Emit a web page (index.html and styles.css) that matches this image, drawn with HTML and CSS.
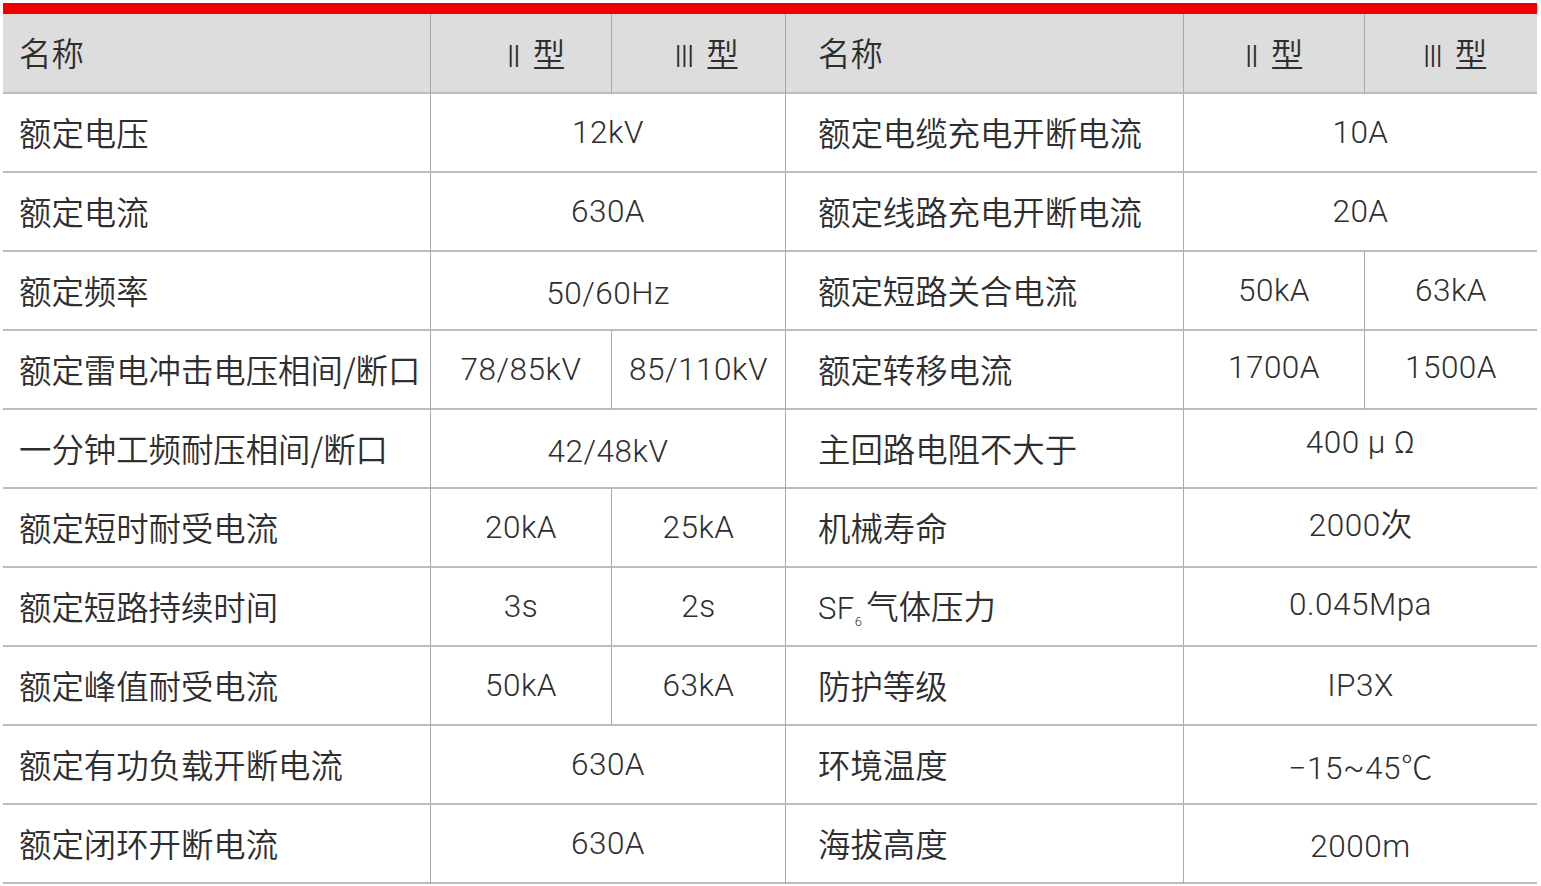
FILE: index.html
```html
<!DOCTYPE html>
<html lang="zh-CN">
<head>
<meta charset="utf-8">
<title>参数表</title>
<link rel="stylesheet" href="styles.css">
</head>
<body>
<div class="wrap">
<table class="spec">
  <colgroup>
    <col class="c1"><col class="c2"><col class="c3"><col class="c4"><col class="c5"><col class="c6">
  </colgroup>
  <thead>
    <tr>
      <th class="name">名称</th>
      <th class="val hl"><span class="roman">II</span> 型</th>
      <th class="val hl2"><span class="roman">III</span> 型</th>
      <th class="name right">名称</th>
      <th class="val"><span class="roman">II</span> 型</th>
      <th class="val hr"><span class="roman">III</span> 型</th>
    </tr>
  </thead>
  <tbody>
    <tr>
      <td class="name">额定电压</td>
      <td class="val" colspan="2">12kV</td>
      <td class="name right">额定电缆充电开断电流</td>
      <td class="val" colspan="2">10A</td>
    </tr>
    <tr>
      <td class="name">额定电流</td>
      <td class="val" colspan="2">630A</td>
      <td class="name right">额定线路充电开断电流</td>
      <td class="val" colspan="2">20A</td>
    </tr>
    <tr>
      <td class="name">额定频率</td>
      <td class="val down" colspan="2">50/60Hz</td>
      <td class="name right">额定短路关合电流</td>
      <td class="val">50kA</td>
      <td class="val">63kA</td>
    </tr>
    <tr>
      <td class="name">额定雷电冲击电压相间/断口</td>
      <td class="val">78/85kV</td>
      <td class="val">85/110kV</td>
      <td class="name right">额定转移电流</td>
      <td class="val up">1700A</td>
      <td class="val up">1500A</td>
    </tr>
    <tr>
      <td class="name">一分钟工频耐压相间/断口</td>
      <td class="val down" colspan="2">42/48kV</td>
      <td class="name right">主回路电阻不大于</td>
      <td class="val up2" colspan="2">400 μ Ω</td>
    </tr>
    <tr>
      <td class="name">额定短时耐受电流</td>
      <td class="val">20kA</td>
      <td class="val">25kA</td>
      <td class="name right">机械寿命</td>
      <td class="val up2" colspan="2">2000<span class="cjk">次</span></td>
    </tr>
    <tr>
      <td class="name">额定短路持续时间</td>
      <td class="val">3s</td>
      <td class="val">2s</td>
      <td class="name right"><span class="lat">SF<sub>6</sub></span>气体压力</td>
      <td class="val up" colspan="2">0.045Mpa</td>
    </tr>
    <tr>
      <td class="name">额定峰值耐受电流</td>
      <td class="val">50kA</td>
      <td class="val">63kA</td>
      <td class="name right">防护等级</td>
      <td class="val" colspan="2">IP3X</td>
    </tr>
    <tr>
      <td class="name">额定有功负载开断电流</td>
      <td class="val" colspan="2">630A</td>
      <td class="name right">环境温度</td>
      <td class="val" colspan="2">−15~45<span class="deg">℃</span></td>
    </tr>
    <tr>
      <td class="name">额定闭环开断电流</td>
      <td class="val" colspan="2">630A</td>
      <td class="name right">海拔高度</td>
      <td class="val down" colspan="2">2000m</td>
    </tr>
  </tbody>
</table>
</div>
</body>
</html>
```

FILE: styles.css
```css
html, body {
  margin: 0;
  padding: 0;
  background: #ffffff;
}

.wrap {
  padding: 3px 4px 0 3px;
}

.spec {
  width: 1534px;
  table-layout: fixed;
  border-collapse: separate;
  border-spacing: 0;
  border-top: 11px solid #f20000;
  color: #2e2e2e;
  font-family: Roboto, "Noto Sans CJK SC", sans-serif;
  font-weight: 300;
}

.c1 { width: 427px; }
.c2 { width: 181px; }
.c3 { width: 174px; }
.c4 { width: 398px; }
.c5 { width: 181px; }
.c6 { width: 173px; }

.spec th,
.spec td {
  box-sizing: border-box;
  height: 79px;
  padding: 0;
  border-bottom: 2px solid #bdbdbd;
  border-left: 1px solid #a9a9a9;
  font-weight: 300;
  font-size: 31.5px;
  letter-spacing: 0.5px;
  vertical-align: middle;
  white-space: nowrap;
}

.spec thead th {
  height: 80px;
  background: #dddddd;
  letter-spacing: 0;
}

.spec th:first-child,
.spec td:first-child {
  border-left: none;
}

.name {
  text-align: left;
  padding-left: 16px !important;
  padding-bottom: 3px !important;
  font-family: "Noto Sans CJK SC", sans-serif;
  font-size: 32.4px !important;
  letter-spacing: 0 !important;
  font-weight: 350 !important;
}

.name.right {
  padding-left: 32px !important;
}

.val {
  text-align: center;
}

.spec td.up { padding-bottom: 5px; }
.spec td.up2 { padding-bottom: 12px; }
.spec td.down { padding-top: 5px; }

.spec thead .val {
  font-family: "Noto Sans CJK SC", sans-serif;
  font-size: 33px;
  font-weight: 350;
  word-spacing: 6px;
}

.spec thead .hl { padding-left: 30px; }
.spec thead .hl2 { padding-left: 16px; }
.spec thead .hr { padding-left: 8px; }

.roman {
  font-family: Roboto, sans-serif;
  font-weight: 300;
  letter-spacing: -2px;
  font-size: 31px;
}

.cjk {
  font-family: "Noto Sans CJK SC", sans-serif;
  font-weight: 350;
  letter-spacing: 0;
}

.deg {
  font-family: "Noto Sans CJK SC", sans-serif;
  font-weight: 300;
  letter-spacing: 0;
}

.lat {
  font-family: Roboto, sans-serif;
  font-weight: 300;
  font-size: 31px;
  letter-spacing: 0.4px;
}

.lat sub {
  font-size: 13px;
  vertical-align: -7px;
  margin-right: 4px;
}
```
